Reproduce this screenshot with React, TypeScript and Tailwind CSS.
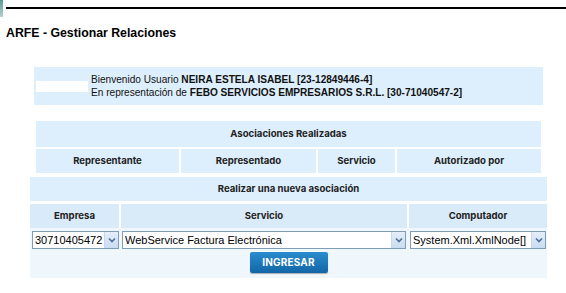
import React from 'react';

const Chevron: React.FC = () => (
  <span className="flex h-full w-[14px] shrink-0 items-center justify-center border-l border-[#c6d8ec] bg-gradient-to-b from-[#e4eefa] to-[#c9dcf2]">
    <svg width="8" height="6" viewBox="0 0 8 6">
      <path d="M1 1.5 L4 4.5 L7 1.5" fill="none" stroke="#4d6f99" strokeWidth="1.6" />
    </svg>
  </span>
);

const FakeSelect: React.FC<{ value: string; className: string }> = ({ value, className }) => (
  <div className={`flex h-[18px] items-center overflow-hidden border border-[#7f9db9] bg-white ${className}`}>
    <span className="flex-1 overflow-hidden whitespace-nowrap pl-[2px] text-[11px] leading-none text-black">{value}</span>
    <Chevron />
  </div>
);

const head = "font-['Inter',sans-serif] text-[9.6px] font-bold text-[#222]";

const App: React.FC = () => {
  return (
    <div className="relative h-[293px] w-[566px] overflow-hidden bg-white font-['Liberation_Sans',Arial,sans-serif] text-black">
      {/* top rule */}
      <div className="flex h-[17px] items-start">
        <div className="h-[17px] w-[3px] bg-gradient-to-b from-[#5c9a95] to-[#b7d3cf]" />
        <div className="ml-[3px] mt-[7px] h-[2px] flex-1 bg-black" />
      </div>

      <h1 className="ml-[6px] mt-[9px] text-[12.3px] font-bold leading-[14px]">ARFE - Gestionar Relaciones</h1>

      {/* welcome box */}
      <div className="ml-[34px] mt-[27px] flex h-[38px] w-[509px] items-center bg-[#ddeefc]">
        <div className="ml-[2px] h-[11px] w-[52px] bg-white" />
        <div className="ml-[3px] text-[10.1px] leading-[13px] text-[#111]">
          <div>
            Bienvenido Usuario <b>NEIRA ESTELA ISABEL [23-12849446-4]</b>
          </div>
          <div>
            En representación de <b>FEBO SERVICIOS EMPRESARIOS S.R.L. [30-71040547-2]</b>
          </div>
        </div>
      </div>

      {/* asociaciones realizadas */}
      <div className={`ml-[36px] mt-[16px] flex w-[505px] flex-col gap-[2px] ${head}`}>
        <div className="flex h-[26px] items-center justify-center bg-[#ddeefc]">Asociaciones Realizadas</div>
        <div className="grid h-[24px] grid-cols-[143px_135px_77px_1fr] gap-[2px]">
          <div className="flex items-center justify-center bg-[#ddeefc]">Representante</div>
          <div className="flex items-center justify-center bg-[#ddeefc]">Representado</div>
          <div className="flex items-center justify-center bg-[#ddeefc]">Servicio</div>
          <div className="flex items-center justify-center bg-[#ddeefc]">Autorizado por</div>
        </div>
      </div>

      {/* nueva asociacion */}
      <div className="ml-[30px] mt-[4px] flex w-[517px] flex-col gap-[3px]">
        <div className={`flex h-[24px] items-center justify-center bg-[#ddeefc] ${head}`}>
          Realizar una nueva asociación
        </div>
        <div className="bg-[#eff7fd]">
          <div className={`grid grid-cols-[89px_286px_1fr] gap-[2px] bg-white ${head}`}>
            <div className="flex h-[24px] items-center justify-center bg-[#d9eaf8]">Empresa</div>
            <div className="flex h-[24px] items-center justify-center bg-[#d9eaf8]">Servicio</div>
            <div className="flex h-[24px] items-center justify-center bg-[#d9eaf8]">Computador</div>
          </div>
          <div className="grid grid-cols-[89px_286px_1fr] gap-[2px] pt-[3px]">
            <FakeSelect value="30710405472" className="ml-[2px]" />
            <FakeSelect value="WebService Factura Electrónica" className="ml-[1px] mr-[1px]" />
            <FakeSelect value="System.Xml.XmlNode[]" className="ml-[1px] mr-[1px]" />
          </div>
          <div className="flex h-[29px] items-start justify-center pt-[3px]">
            <button className="h-[21px] w-[78px] rounded-[2px] bg-gradient-to-b from-[#2a8ccf] to-[#1266a6] font-['Inter',sans-serif] text-[10px] font-bold tracking-[0.2px] text-white shadow-[0_1px_1px_rgba(0,0,0,0.3)]">
              INGRESAR
            </button>
          </div>
        </div>
      </div>
    </div>
  );
};

export default App;
